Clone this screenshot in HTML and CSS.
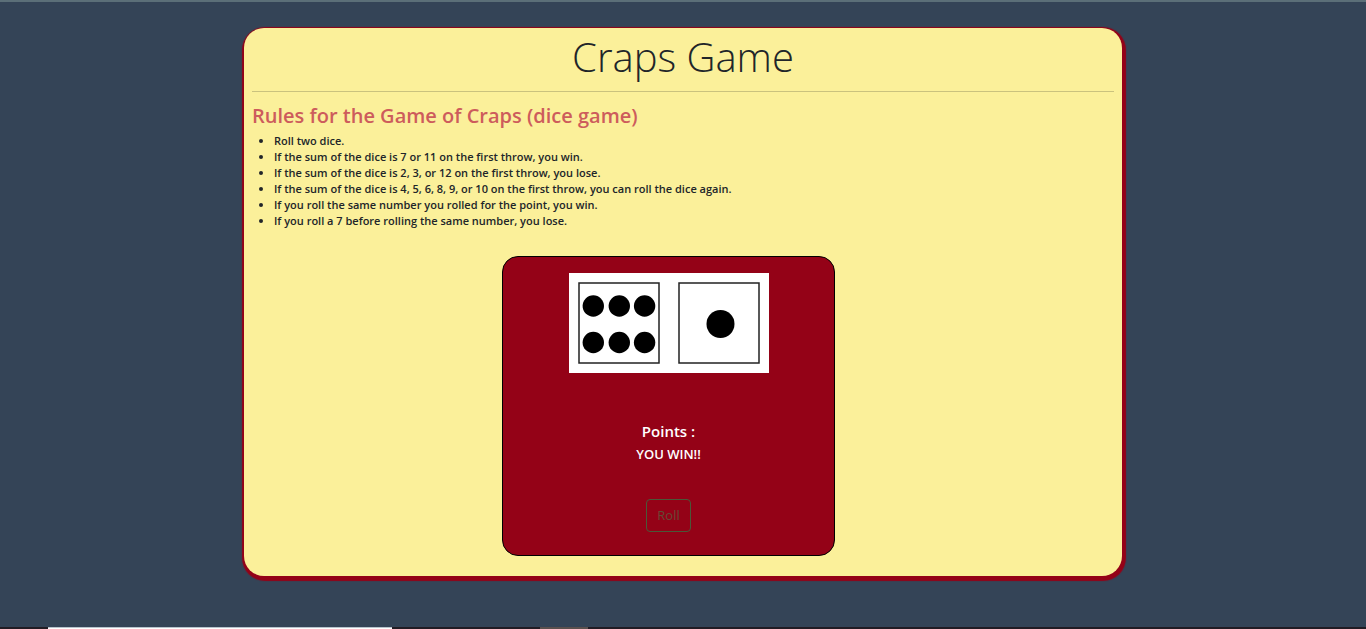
FILE: index.html
```html
<!DOCTYPE html>
<html lang="en">
<head>
<meta charset="utf-8">
<title>Craps Game</title>
<meta name="viewport" content="width=device-width, initial-scale=1">
<link rel="stylesheet" href="styles.css">
</head>
<body>
<main class="card">
  <h1 class="title">Craps Game</h1>
  <hr class="rule">
  <h2 class="subtitle">Rules for the Game of Craps (dice game)</h2>
  <ul class="rules">
    <li>Roll two dice.</li>
    <li>If the sum of the dice is 7 or 11 on the first throw, you win.</li>
    <li>If the sum of the dice is 2, 3, or 12 on the first throw, you lose.</li>
    <li>If the sum of the dice is 4, 5, 6, 8, 9, or 10 on the first throw, you can roll the dice again.</li>
    <li>If you roll the same number you rolled for the point, you win.</li>
    <li>If you roll a 7 before rolling the same number, you lose.</li>
  </ul>
  <section class="board">
    <div class="dice">
      <svg class="die" viewBox="0 0 100 100" role="img" aria-label="Six">
        <rect class="face" x="10" y="10" width="80" height="80"/>
        <circle cx="24.300" cy="33" r="10.700"/><circle cx="50.300" cy="33" r="10.700"/><circle cx="75.600" cy="33" r="10.700"/>
        <circle cx="24.300" cy="69.500" r="10.700"/><circle cx="50.300" cy="69.500" r="10.700"/><circle cx="75.600" cy="69.500" r="10.700"/>
      </svg>
      <svg class="die" viewBox="0 0 100 100" role="img" aria-label="One">
        <rect class="face" x="10" y="10" width="80" height="80"/>
        <circle cx="51.500" cy="51" r="14"/>
      </svg>
    </div>
    <h3 class="points">Points :</h3>
    <p class="result">YOU WIN!!</p>
    <button class="roll" type="button" disabled>Roll</button>
  </section>
</main>
<footer class="taskbar">
  <span class="window"></span>
  <span class="active"></span>
</footer>
</body>
</html>
```
FILE: styles.css
```css
* { box-sizing: border-box; }

body {
  margin: 0;
  min-height: 100vh;
  display: flex;
  flex-direction: column;
  border-top: 2px solid #5b6f78;
  background: #344457;
  color: #212529;
  font-family: "Segoe UI", "Open Sans", "Noto Sans", sans-serif;
}

.card {
  width: calc(100% - 488px);
  min-width: 480px;
  margin: 26px auto 0;
  padding: 7px 8px 20px;
  border-radius: 20px;
  background: #fbf09a;
  box-shadow: 1px 2px 1px 3px #940217;
}

.title {
  margin: 0;
  font-size: 40px;
  line-height: 44px;
  font-weight: 300;
  text-align: center;
}

.rule {
  height: 1px;
  margin: 12px 0 11px;
  border: 0;
  background: #cac27e;
}

.subtitle {
  margin: 0 0 5px;
  color: #cd5c5c;
  font-size: 20px;
  line-height: 25px;
  font-weight: 600;
}

.rules {
  margin: 0;
  padding-left: 22px;
  font-size: 11px;
  line-height: 16px;
  font-weight: 600;
}

.board {
  display: flex;
  flex-direction: column;
  align-items: center;
  width: 333px;
  margin: 27px auto 0 250px;
  padding: 16px 16px 23px;
  border: 1px solid #000;
  border-radius: 16px;
  background: #940217;
  color: #fff;
}

.dice {
  display: flex;
  background: #fff;
}

.die {
  display: block;
  width: 100px;
  height: 100px;
}

.face {
  fill: none;
  stroke: #222;
  stroke-width: 1.5;
}

.points {
  margin: 48px 0 0;
  font-size: 15px;
  line-height: 20px;
  font-weight: 600;
}

.result {
  margin: 4px 0 0;
  font-size: 13px;
  line-height: 18px;
  font-weight: 600;
}

.roll {
  margin-top: 36px;
  padding: 0 10px;
  border: 1px solid #4b5738;
  border-radius: 4px;
  background: transparent;
  color: #654a35;
  font-family: inherit;
  font-size: 13px;
  line-height: 31px;
}

.taskbar {
  display: flex;
  height: 2px;
  margin-top: auto;
  padding-left: 48px;
  gap: 148px;
  background: #211c24;
}

.window {
  width: 344px;
  border-top: 1px solid #b8c3cd;
  background: #fff;
}

.active {
  width: 48px;
  background: #5a504e;
}
```
